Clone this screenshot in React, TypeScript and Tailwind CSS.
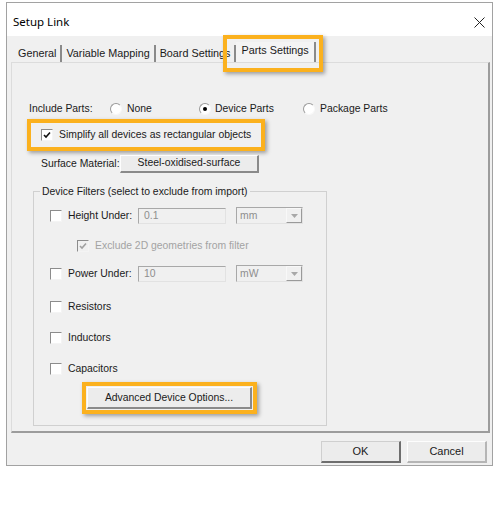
import React from "react";

const font = { fontFamily: '"Liberation Sans", Arial, sans-serif' };

function CheckBox({ checked = false, disabled = false }: { checked?: boolean; disabled?: boolean }) {
  return (
    <span
      className={
        "flex h-[12px] w-[12px] shrink-0 items-center justify-center border border-t-[#8c8c8c] border-l-[#8c8c8c] border-b-[#f4f4f4] border-r-[#f4f4f4] " +
        (disabled ? "bg-[#f0f0f0]" : "bg-white")
      }
    >
      {checked && (
        <svg width="8" height="8" viewBox="0 0 8 8">
          <path
            d="M1 4 L3 6 L7 1.5"
            fill="none"
            stroke={disabled ? "#a0a0a0" : "#111"}
            strokeWidth="1.6"
          />
        </svg>
      )}
    </span>
  );
}

function Radio({ on = false }: { on?: boolean }) {
  return (
    <span className="flex h-[12px] w-[12px] shrink-0 items-center justify-center rounded-full border border-t-[#9a9a9a] border-l-[#9a9a9a] border-b-[#f8f8f8] border-r-[#f8f8f8] bg-white">
      {on && <span className="h-[4px] w-[4px] rounded-full bg-black" />}
    </span>
  );
}

function Field({ value }: { value: string }) {
  return (
    <div className="flex h-[16px] w-[88px] items-center border border-t-[#a8a8a8] border-l-[#a8a8a8] border-b-[#e2e2e2] border-r-[#e2e2e2] bg-[#f0f0f0] pl-[5px] text-[#8e8e8e]">
      {value}
    </div>
  );
}

function Combo({ value }: { value: string }) {
  return (
    <div className="ml-[10px] flex h-[17px] w-[67px] items-center border border-t-[#a8a8a8] border-l-[#a8a8a8] border-b-[#e2e2e2] border-r-[#e2e2e2] bg-[#f0f0f0] text-[#8e8e8e]">
      <span className="flex-1 pl-[3px]">{value}</span>
      <span className="flex h-full w-[16px] items-center justify-center border-l border-t border-l-[#f8f8f8] border-t-[#f8f8f8] border-r border-b border-r-[#9a9a9a] border-b-[#9a9a9a]">
        <svg width="7" height="4" viewBox="0 0 7 4">
          <path d="M0 0 H7 L3.5 4 Z" fill="#a8a8a8" />
        </svg>
      </span>
    </div>
  );
}

function Tab({ label, active = false }: { label: string; active?: boolean }) {
  return (
    <div
      className={
        "relative flex items-center whitespace-nowrap border-r-2 border-r-[#8a8a8a] text-[10.8px] text-[#1a1a1a] " +
        (active ? "h-[20px] bg-[#f4f4f4] px-[5px] pb-[3px]" : "h-[17px] px-[4px]")
      }
    >
      {label}
      {active && (
        <div className="pointer-events-none absolute -left-[13px] -right-[9px] -top-[7px] -bottom-[10px] border-4 border-[#fbb11e] shadow-[2px_2px_4px_rgba(0,0,0,0.35)]" />
      )}
    </div>
  );
}

function Highlight({ className, children }: { className: string; children: React.ReactNode }) {
  return (
    <div className={"border-4 border-[#fbb11e] shadow-[2px_2px_4px_rgba(0,0,0,0.35)] " + className}>
      {children}
    </div>
  );
}

function RaisedButton({ className, children }: { className: string; children: React.ReactNode }) {
  return (
    <div
      className={
        "flex items-center justify-center whitespace-nowrap border border-t-[#fdfdfd] border-l-[#fdfdfd] border-b-2 border-r-2 border-b-[#8a8a8a] border-r-[#8a8a8a] bg-[#ececec] text-[#1a1a1a] " +
        className
      }
    >
      {children}
    </div>
  );
}

function FilterRow({ label, children }: { label: string; children?: React.ReactNode }) {
  return (
    <div className="flex h-[17px] items-center pl-[16px]">
      <CheckBox />
      <span className="ml-[6px] w-[70px] whitespace-nowrap text-[#1a1a1a]">{label}</span>
      {children}
    </div>
  );
}

export default function App() {
  return (
    <div className="h-[509px] w-[496px] bg-white pt-[2px]" style={font}>
      <div className="ml-[6px] flex h-[464px] w-[487px] flex-col border border-[#a2a2a2]">
        {/* title bar */}
        <div className="flex h-[33px] items-center justify-between bg-white pl-[6px] pr-[6px] pt-[5px]">
          <span className="text-[11.5px] text-black" style={{ fontFamily: '"Noto Sans", sans-serif' }}>
            Setup Link
          </span>
          <svg width="11" height="11" viewBox="0 0 11 11" className="mr-[1px]">
            <path d="M0.5 0.5 L10.5 10.5 M10.5 0.5 L0.5 10.5" stroke="#222" strokeWidth="1" />
          </svg>
        </div>

        <div className="flex flex-1 flex-col bg-[#f0f0f0] px-[4px]">
          {/* tabs */}
          <div className="flex h-[26px] items-end pl-[3px]">
            <Tab label="General" />
            <Tab label="Variable Mapping" />
            <Tab label="Board Settings" />
            <Tab label="Parts Settings" active />
          </div>

          {/* tab panel */}
          <div className="h-[371px] w-[479px] border-l border-t border-l-[#dcdcdc] border-t-[#dcdcdc] border-r-2 border-b-2 border-r-[#9c9c9c] border-b-[#9c9c9c] bg-[#f0f0f0] pt-[38px] text-[10.4px] text-[#1a1a1a]">
            <div className="flex h-[16px] items-center whitespace-nowrap pl-[17px]">
              <span className="w-[81px]">Include Parts:</span>
              <div className="flex w-[89px] items-center">
                <Radio />
                <span className="ml-[5px]">None</span>
              </div>
              <div className="flex w-[104px] items-center">
                <Radio on />
                <span className="ml-[4px]">Device Parts</span>
              </div>
              <div className="flex items-center">
                <Radio />
                <span className="ml-[5px]">Package Parts</span>
              </div>
            </div>

            <Highlight className="ml-[15px] mt-[2px] flex h-[32px] w-[238px] items-center whitespace-nowrap pl-[10px]">
              <CheckBox checked />
              <span className="ml-[6px]">Simplify all devices as rectangular objects</span>
            </Highlight>

            <div className="ml-[29px] mt-[4px] flex h-[17px] items-center whitespace-nowrap">
              <span className="w-[79px]">Surface Material:</span>
              <RaisedButton className="h-[18px] w-[139px]">Steel-oxidised-surface</RaisedButton>
            </div>

            <fieldset className="ml-[21px] mt-[13px] h-[241px] w-[294px] border border-[#d0d0d0] px-0">
              <legend className="ml-[6px] whitespace-nowrap px-[2px] leading-[13px]">
                Device Filters (select to exclude from import)
              </legend>
              <div className="mt-[9px] flex flex-col">
                <FilterRow label="Height Under:">
                  <Field value="0.1" />
                  <Combo value="mm" />
                </FilterRow>
                <div className="mt-[13px] flex h-[17px] items-center whitespace-nowrap pl-[43px]">
                  <CheckBox checked disabled />
                  <span className="ml-[6px] text-[#a3a3a3]">Exclude 2D geometries from filter</span>
                </div>
                <div className="mt-[11px]">
                  <FilterRow label="Power Under:">
                    <Field value="10" />
                    <Combo value="mW" />
                  </FilterRow>
                </div>
                <div className="mt-[16px]">
                  <FilterRow label="Resistors" />
                </div>
                <div className="mt-[14px]">
                  <FilterRow label="Inductors" />
                </div>
                <div className="mt-[14px]">
                  <FilterRow label="Capacitors" />
                </div>
                <Highlight className="ml-[48px] mt-[5px] flex h-[32px] w-[175px] items-center justify-center">
                  <RaisedButton className="h-[22px] w-[165px]">Advanced Device Options...</RaisedButton>
                </Highlight>
              </div>
            </fieldset>
          </div>

          {/* bottom buttons */}
          <div className="mt-[8px] flex justify-end gap-[6px] pr-[1px]">
            <div className="flex h-[22px] w-[80px] items-center justify-center border border-t-[#cfcfcf] border-l-[#cfcfcf] border-b-2 border-r-2 border-b-[#6e6e6e] border-r-[#6e6e6e] bg-[#ececec] text-[11px] text-[#1a1a1a]">
              OK
            </div>
            <div className="flex h-[22px] w-[80px] items-center justify-center border border-t-[#fdfdfd] border-l-[#fdfdfd] border-b-2 border-r-2 border-b-[#b5b5b5] border-r-[#b5b5b5] bg-[#ececec] text-[11px] text-[#1a1a1a]">
              Cancel
            </div>
          </div>
        </div>
      </div>
    </div>
  );
}
